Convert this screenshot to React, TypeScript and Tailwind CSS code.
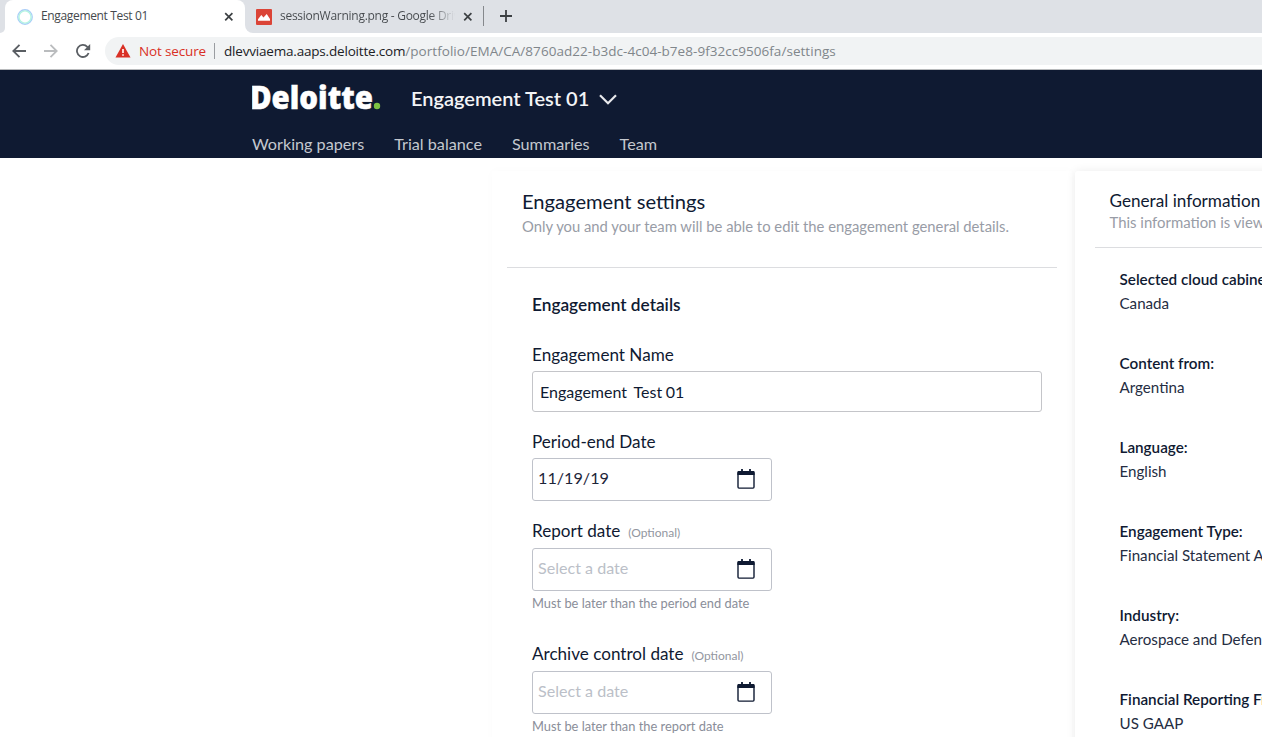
import React from 'react';

const Calendar = () => (
  <svg className="mr-4 mb-px shrink-0" width="18" height="20" viewBox="0 0 18 20" fill="none">
    <path d="M5 0v3M13 0v3" stroke="#0f1a32" strokeWidth="1.8" />
    <path d="M1.4 2h15.2a1 1 0 0 1 1 1v3H.4V3a1 1 0 0 1 1-1z" fill="#0f1a32" />
    <rect x="1" y="3.3" width="16" height="15.8" rx="1" stroke="#0f1a32" strokeWidth="1.4" />
  </svg>
);

const CloseIcon = () => (
  <svg className="shrink-0" width="10" height="10" viewBox="0 0 10 10">
    <path d="M1.2 1.2l7.2 7.2M8.4 1.2L1.2 8.4" stroke="#3c4043" strokeWidth="1.7" />
  </svg>
);

type DateFieldProps = { value?: string };

const DateField = ({ value }: DateFieldProps) => (
  <div className="flex h-[43px] w-[240px] items-center justify-between rounded-[3px] border border-[#bfc2ca] bg-white pl-[5px]">
    <span className={value ? 'pb-[3px] text-[16.2px] text-[#1d2539]' : 'pb-[3px] text-[16.1px] text-[#bbbfc8]'}>
      {value ?? 'Select a date'}
    </span>
    <Calendar />
  </div>
);

const info = [
  ['Selected cloud cabinet:', 'Canada'],
  ['Content from:', 'Argentina'],
  ['Language:', 'English'],
  ['Engagement Type:', 'Financial Statement Audit'],
  ['Industry:', 'Aerospace and Defense'],
  ['Financial Reporting Framework:', 'US GAAP'],
];

const TabStrip = () => (
  <div className="flex h-[33px] items-stretch bg-[#dee1e6]">
    <div className="flex w-[5px] items-end bg-white">
      <div className="h-[33px] w-[5px] rounded-br-[6px] bg-[#dee1e6]" />
    </div>
    <div className="flex w-[240px] items-center rounded-t-[8px] bg-white pl-3">
      <svg className="shrink-0" width="16" height="16" viewBox="0 0 16 16" fill="none">
        <circle cx="8" cy="8" r="7.2" stroke="#a9cdf8" strokeWidth="1.4" />
        <circle cx="8" cy="8" r="6.1" stroke="#b5f5e2" strokeWidth="1.4" />
      </svg>
      <span className="ml-2 w-[183px] pb-px text-[12px] tracking-[-0.34px] text-[#45494d]">Engagement Test 01</span>
      <CloseIcon />
    </div>
    <div className="flex w-[238px] bg-white">
      <div className="flex w-[238px] items-center rounded-bl-[8px] bg-[#dee1e6] pl-[11px]">
        <svg className="shrink-0" width="16" height="16" viewBox="0 0 16 16">
          <rect width="16" height="16" rx="1" fill="#db4437" />
          <path d="M2 11.8V10.3L5.3 6l2.2 2.4L10.7 5l3.3 5v1.8z" fill="#fff" />
        </svg>
        <span className="ml-2 w-[175px] overflow-hidden bg-linear-to-r from-[#45494d] from-85% to-[#45494d]/0 bg-clip-text pb-px text-[12px] tracking-[-0.27px] text-transparent">
          sessionWarning.png - Google Drive
        </span>
        <span className="ml-[8px] flex"><CloseIcon /></span>
      </div>
    </div>
    <div className="mt-[6px] h-5 w-px bg-[#85888c]" />
    <svg className="ml-[16px] mt-[10px]" width="12" height="12" viewBox="0 0 12 12">
      <path d="M6 0v12M0 6h12" stroke="#3c4043" strokeWidth="1.8" />
    </svg>
  </div>
);

const Toolbar = () => (
  <div className="flex h-[37px] items-center border-b border-[#b8babc] bg-white pl-3">
    <svg width="14" height="14" viewBox="0 0 14 14" fill="none" stroke="#5a5e63" strokeWidth="1.8">
      <path d="M14 7H1.5M7.5 .8L1.3 7l6.2 6.2" />
    </svg>
    <svg className="ml-[18px]" width="14" height="14" viewBox="0 0 14 14" fill="none" stroke="#babcbe" strokeWidth="1.8">
      <path d="M0 7h12.5M6.5 .8L12.7 7l-6.2 6.2" />
    </svg>
    <svg className="ml-[18px]" width="15" height="14" viewBox="0 0 15 14" fill="none">
      <path d="M12.6 9A6 6 0 1 1 11.3 2.8L13 4.5" stroke="#5a5e63" strokeWidth="1.8" />
      <path d="M14.2 0v6.2H8z" fill="#5a5e63" />
    </svg>
    <div className="ml-[14px] flex h-7 flex-1 items-center rounded-l-full bg-[#f1f3f4] pl-[10px] text-[13.5px] whitespace-pre">
      <svg width="16" height="14" viewBox="0 0 16 14">
        <path d="M8 0l7.5 13.5H.5z" fill="#d93025" />
        <path d="M8 5v4M8 10.2v1.6" stroke="#fff" strokeWidth="1.6" />
      </svg>
      <span className="ml-[8px] w-[75px] tracking-[-0.15px] text-[#d93025]">Not secure</span>
      <span className="h-4 w-px bg-[#9a9da1]" />
      <span className="ml-[9px] tracking-[-0.19px] text-[#202124]">dlevviaema.aaps.deloitte.com</span>
      <span className="tracking-[0.04px] text-[#80868b]">/portfolio/EMA/CA/8760ad22-b3dc-4c04-b7e8-9f32cc9506fa/settings</span>
    </div>
  </div>
);

const Header = () => (
  <header className="h-[88px] bg-[#0f1a32] pl-[252px]">
    <div className="flex h-[60px] items-center pb-1">
      <svg width="130" height="30" viewBox="0 0 130 30">
        <text x="-2" y="26" textLength="123" lengthAdjust="spacingAndGlyphs" strokeWidth="0.5" className="fill-white stroke-white font-['Open_Sans'] text-[32.5px] font-extrabold">Deloitte</text>
        <circle cx="125" cy="23" r="3.2" fill="#7fc242" />
      </svg>
      <span className="ml-[29px] text-[20px] leading-6 font-semibold text-[#f3f4f6]">Engagement Test 01</span>
      <svg className="mt-[3px] ml-[10px]" width="18" height="11" viewBox="0 0 18 11" fill="none">
        <path d="M1 1.2l8 8 8-8" stroke="#e8e9ec" strokeWidth="2.2" />
      </svg>
    </div>
    <nav className="flex gap-[30px] text-[16.2px] leading-7 text-[#c4c8cf]">
      <span>Working papers</span>
      <span>Trial balance</span>
      <span>Summaries</span>
      <span>Team</span>
    </nav>
  </header>
);

export default function App() {
  return (
    <div className="flex h-[737px] w-[1262px] flex-col overflow-hidden bg-white font-['Lato',sans-serif] whitespace-nowrap text-[#0f1a32]">
      <div className="shrink-0 font-['Open_Sans',sans-serif]">
        <TabStrip />
        <Toolbar />
      </div>
      <div className="shrink-0"><Header /></div>
      <main className="flex min-h-0 flex-1 pt-[13px]">
        <section className="ml-[492px] h-[700px] w-[580px] shrink-0 px-[15px] shadow-[0_0_10px_rgba(0,0,0,0.02)]">
          <div className="h-[97px] border-b border-[#dcdde0] pt-[18px] pl-[15px]">
            <h1 className="text-[20.15px] leading-6">Engagement settings</h1>
            <p className="pt-px text-[14.8px] leading-[25px] text-[#989ca6]">Only you and your team will be able to edit the engagement general details.</p>
          </div>
          <div className="pl-[25px]">
            <h2 className="pt-[25px] text-[17.25px] leading-6 font-semibold">Engagement details</h2>
            <div className="pt-[26px] text-[17.1px] leading-6">Engagement Name</div>
            <div className="mt-1 flex h-[41px] w-[510px] items-center rounded-[3px] border border-[#c4c5c9] pl-[7px] text-[16px] [word-spacing:-0.6px] whitespace-pre">Engagement  Test 01</div>
            <div className="mt-[18px] mb-1 text-[17.1px] leading-6">Period-end Date</div>
            <DateField value="11/19/19" />
            <div className="mt-[18px] mb-[3px] flex h-[26px] text-[17.1px] leading-6">
              Report date<span className="ml-2 pt-[2px] text-[12px] text-[#9296a0]">(Optional)</span>
            </div>
            <DateField />
            <div className="text-[12.85px] leading-6 text-[#8a8e99]">Must be later than the period end date</div>
            <div className="mt-[27px] mb-[3px] flex h-[26px] text-[17.1px] leading-6">
              Archive control date<span className="ml-2 pt-[2px] text-[12px] text-[#9296a0]">(Optional)</span>
            </div>
            <DateField />
            <div className="text-[12.85px] leading-6 text-[#8a8e99]">Must be later than the report date</div>
          </div>
        </section>
        <aside className="ml-[3px] h-[700px] w-[400px] shrink-0 rounded-[3px] bg-white pl-5 shadow-[0_0_10px_rgba(0,0,0,0.08)]">
          <div className="h-[77px] border-b border-[#dcdde0] pt-[19px] pl-[14.5px]">
            <h2 className="text-[17.15px] leading-[22px]">General information</h2>
            <p className="-mt-px text-[14.9px] leading-[22px] text-[#989ca6]">This information is viewable only</p>
          </div>
          <dl className="flex flex-col gap-9 pt-[19px] pl-[24.5px] text-[15.15px] leading-6">
            {info.map(([k, v]) => (
              <div key={k}>
                <dt className="text-[15.25px] font-semibold">{k}</dt>
                <dd className="text-[#252d42]">{v}</dd>
              </div>
            ))}
          </dl>
        </aside>
      </main>
    </div>
  );
}
